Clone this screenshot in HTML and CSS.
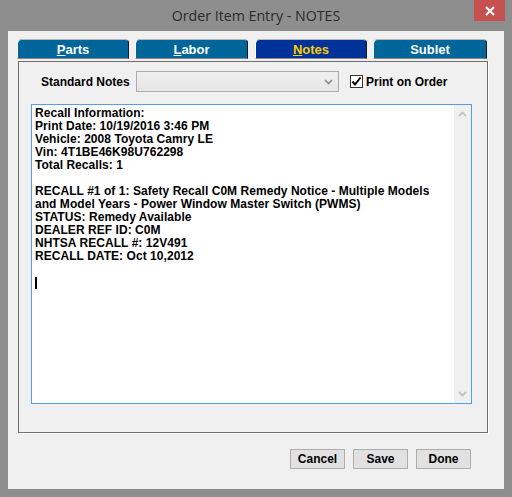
FILE: index.html
```html
<!DOCTYPE html>
<html>
  <head>
    <meta charset="UTF-8" />
    <title>Order Item Entry - NOTES</title>
    <link rel="stylesheet" href="styles.css">
  </head>
  <body>
    <!-- ウィンドウ全体 -->
    <div class="window">
      <!-- タイトルバー -->
      <div class="titlebar">
        <span></span>
        <span class="title">Order Item Entry - NOTES</span>
        <button class="close-btn" aria-label="Close">
          <svg width="10" height="10" viewBox="0 0 10 10">
            <path d="M1 1 L9 9 M9 1 L1 9" stroke="#fff" stroke-width="2" />
          </svg>
        </button>
      </div>

      <!-- クライアント領域 -->
      <div class="client">
        <!-- タブ -->
        <div class="tabs">
          <div class="tab tab-parts"><u>P</u>arts</div>
          <div class="tab tab-labor"><u>L</u>abor</div>
          <div class="tab tab-notes active"><u>N</u>otes</div>
          <div class="tab tab-sublet">Sublet</div>
        </div>

        <!-- タブの中身 -->
        <div class="panel">
          <div class="notes-row">
            <label class="notes-label" for="standard-notes">Standard Notes</label>
            <div class="select" id="standard-notes">
              <svg class="chevron" width="9" height="6" viewBox="0 0 9 6">
                <path d="M1 1 L4.5 4.5 L8 1" stroke="#8a8a8a" stroke-width="1.6" fill="none" />
              </svg>
            </div>
            <label class="print-check">
              <span class="checkbox">
                <svg width="11" height="11" viewBox="0 0 11 11">
                  <path d="M1.5 5.5 L4 8.5 L9.5 1.5" stroke="#000" stroke-width="2" fill="none" />
                </svg>
              </span>
              Print on Order
            </label>
          </div>

          <!-- メモ欄 -->
          <div class="notes-box">
            <div class="notes-text">
              <div>Recall Information:</div>
              <div>Print Date: 10/19/2016 3:46 PM</div>
              <div>Vehicle: 2008 Toyota Camry LE</div>
              <div>Vin: 4T1BE46K98U762298</div>
              <div>Total Recalls: 1</div>
              <div class="blank"></div>
              <div>RECALL #1 of 1: Safety Recall C0M Remedy Notice - Multiple Models</div>
              <div>and Model Years - Power Window Master Switch (PWMS)</div>
              <div>STATUS: Remedy Available</div>
              <div>DEALER REF ID: C0M</div>
              <div>NHTSA RECALL #: 12V491</div>
              <div>RECALL DATE: Oct 10,2012</div>
              <div class="blank"></div>
              <div><span class="caret"></span></div>
            </div>
            <div class="scrollbar">
              <svg width="9" height="6" viewBox="0 0 9 6">
                <path d="M1 5 L4.5 1.5 L8 5" stroke="#c2c2c2" stroke-width="1.8" fill="none" />
              </svg>
              <svg width="9" height="6" viewBox="0 0 9 6">
                <path d="M1 1 L4.5 4.5 L8 1" stroke="#c2c2c2" stroke-width="1.8" fill="none" />
              </svg>
            </div>
          </div>
        </div>

        <!-- 下のボタン -->
        <div class="actions">
          <button class="btn">Cancel</button>
          <button class="btn">Save</button>
          <button class="btn">Done</button>
        </div>
      </div>
    </div>
  </body>
</html>
```

FILE: styles.css
```css
/* ウィンドウ枠 */
body {
  margin: 0;
  background-color: #8e8e8e;
  font-family: "Liberation Sans", Arial, sans-serif;
}

.window {
  width: 512px;
  height: 497px;
  display: flex;
  flex-direction: column;
}

/* タイトルバー */
.titlebar {
  height: 31px;
  display: grid;
  grid-template-columns: 1fr auto 1fr;
  align-items: start;
}

.title {
  font-family: "Open Sans", "Liberation Sans", sans-serif;
  font-size: 14.2px;
  color: #2b2b2b;
  line-height: 31px;
}

.close-btn {
  justify-self: end;
  margin-right: 7px;
  width: 31px;
  height: 21px;
  border: none;
  padding: 0;
  background-color: #c75050;
  display: flex;
  align-items: center;
  justify-content: center;
}

/* クライアント領域 */
.client {
  margin: 0 8px;
  height: 458px;
  background-color: #f0f0f0;
  display: flex;
  flex-direction: column;
}

/* タブ */
.tabs {
  display: flex;
  padding: 8px 0 0 9px;
  height: 20px;
}

.tab {
  height: 20px;
  box-sizing: border-box;
  background-color: #006699;
  color: #fff;
  font-weight: bold;
  font-size: 13px;
  line-height: 19px;
  text-align: center;
  border-top: 1px solid #b8b8b8;
  border-left: 1px solid #fff;
  border-right: 1px solid #1a1a1a;
  border-radius: 5px 4px 0 0;
  border-bottom: 1px solid #8a8a8a;
}

.tab-parts {
  width: 112px;
}

.tab-labor {
  width: 113px;
  margin-left: 6px;
}

.tab-notes {
  width: 112px;
  margin-left: 7px;
}

.tab-sublet {
  width: 114px;
  margin-left: 6px;
}

.tab.active {
  background-color: #003399;
  color: #ffcc00;
}

/* タブの中身 */
.panel {
  margin: 2px 0 0 10px;
  width: 470px;
  height: 372px;
  box-sizing: border-box;
  border: 1px solid #6e6e6e;
  box-shadow: 1px 1px 0 #fff;
  padding: 9px 0 0 12px;
}

.notes-row {
  display: flex;
  align-items: center;
  height: 21px;
}

.notes-label {
  font-size: 12px;
  font-weight: bold;
  margin-left: 10px;
  width: 95px;
}

.select {
  width: 203px;
  height: 21px;
  box-sizing: border-box;
  border: 1px solid #acacac;
  background: linear-gradient(#f0f0f0, #e5e5e5);
  display: flex;
  align-items: center;
  justify-content: flex-end;
  padding-right: 5px;
}

.print-check {
  display: flex;
  align-items: center;
  margin-left: 11px;
  font-size: 12px;
  font-weight: bold;
}

.checkbox {
  width: 13px;
  height: 13px;
  box-sizing: border-box;
  border: 1px solid #333;
  background-color: #fff;
  display: flex;
  align-items: center;
  justify-content: center;
  margin-right: 3px;
}

/* メモ欄 */
.notes-box {
  margin-top: 12px;
  width: 441px;
  height: 300px;
  box-sizing: border-box;
  border: 1px solid #569de5;
  background-color: #fff;
  display: flex;
}

.notes-text {
  flex: 1;
  padding: 2px 0 0 3px;
  font-size: 12px;
  font-weight: bold;
  line-height: 13px;
  letter-spacing: 0.05px;
  color: #000;
}

.blank {
  height: 13px;
}

.caret {
  display: inline-block;
  width: 2px;
  height: 12px;
  background-color: #000;
  vertical-align: middle;
}

.scrollbar {
  width: 17px;
  background-color: #f0f0f0;
  display: flex;
  flex-direction: column;
  justify-content: space-between;
  align-items: center;
  padding: 6px 0 6px;
}

/* 下のボタン */
.actions {
  display: flex;
  justify-content: flex-end;
  gap: 8px;
  margin-top: 16px;
  padding-right: 33px;
}

.btn {
  width: 55px;
  height: 20px;
  border: 1px solid #adadad;
  background-color: #e1e1e1;
  font-family: "Liberation Sans", Arial, sans-serif;
  font-size: 12px;
  font-weight: bold;
  padding: 0;
}
```
